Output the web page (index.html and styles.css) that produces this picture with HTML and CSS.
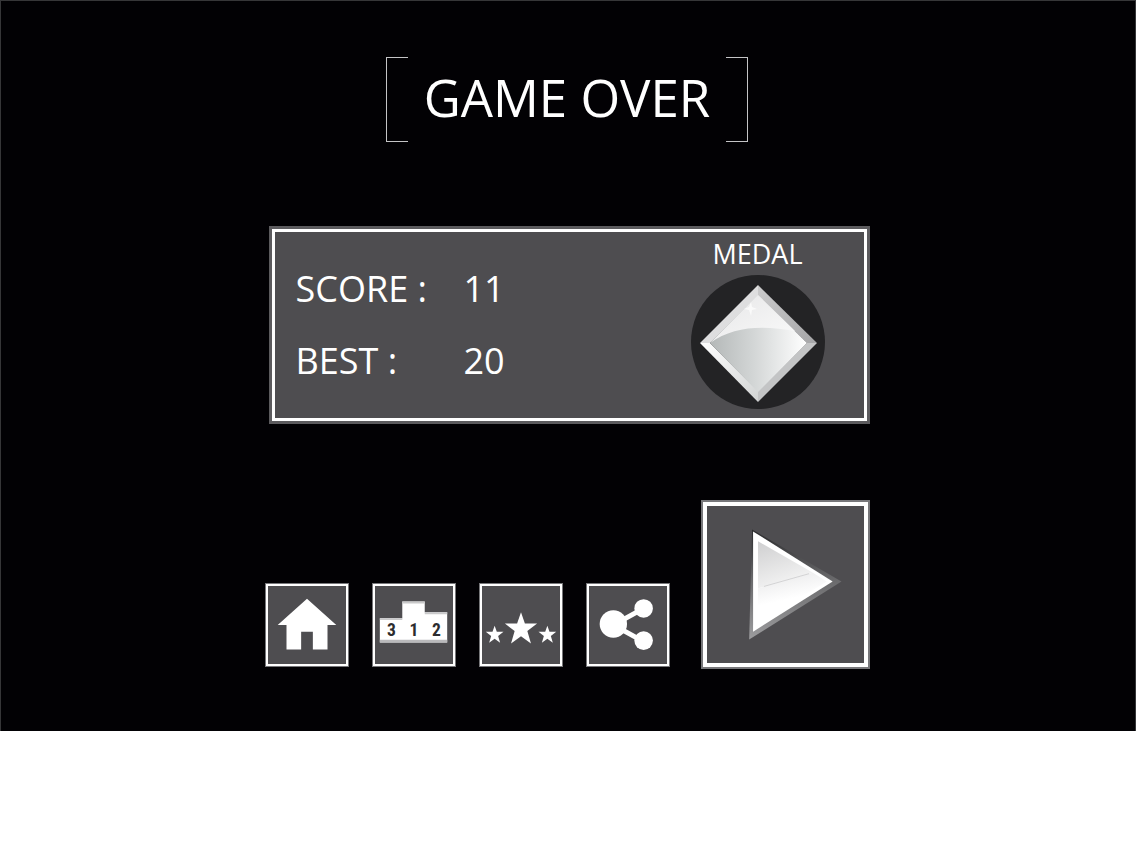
FILE: index.html
```html
<!DOCTYPE html>
<html lang="en">
<head>
    <meta charset="UTF-8">
    <meta name="viewport" content="width=device-width, initial-scale=1">
    <title>Game Over</title>
    <link rel="stylesheet" href="styles.css">
</head>
<body>

<main class="screen">
    <h1 class="title">GAME OVER</h1>

    <div class="content">
        <section class="board">
            <dl class="scores">
                <dt>SCORE :</dt>
                <dd>11</dd>
                <dt>BEST :</dt>
                <dd>20</dd>
            </dl>

            <div class="medal">
                <h2 class="medal-title">MEDAL</h2>
                <svg class="medal-icon" viewBox="0 0 134 134" aria-hidden="true">
                    <defs>
                        <linearGradient id="face" x1="0" y1="0" x2="1" y2="0">
                            <stop offset="0" stop-color="#b4b8b8"/>
                            <stop offset="0.45" stop-color="#d3d6d6"/>
                            <stop offset="1" stop-color="#ffffff"/>
                        </linearGradient>
                        <linearGradient id="shine" x1="0" y1="0" x2="1" y2="1">
                            <stop offset="0" stop-color="#e6e6e7"/>
                            <stop offset="1" stop-color="#fafafa"/>
                        </linearGradient>
                        <linearGradient id="edge-right" x1="0" y1="0" x2="1" y2="1">
                            <stop offset="0" stop-color="#cccccd"/>
                            <stop offset="1" stop-color="#a5a5a7"/>
                        </linearGradient>
                        <linearGradient id="edge-low" x1="0" y1="0" x2="1" y2="1">
                            <stop offset="0" stop-color="#ffffff"/>
                            <stop offset="1" stop-color="#d2d4d4"/>
                        </linearGradient>
                    </defs>
                    <circle cx="67" cy="67" r="67" fill="#232325"/>
                    <path d="M67 10L9 68H19L67 21z" fill="#dededf"/>
                    <path d="M67 10l59 58H116L67 21z" fill="url(#edge-right)"/>
                    <path d="M9 68l58 59V116L19 68z" fill="url(#edge-low)"/>
                    <path d="M126 68l-59 59V116L116 68z" fill="#c3c4c5"/>
                    <path d="M67 20l49 48-49 49-48-49z" fill="url(#face)"/>
                    <path d="M67 20L19 68C42 51 72 50 104 56z" fill="url(#shine)"/>
                    <path d="M60 27l1 5 5 2-5 1-1 6-2-6-5-1 5-2z" fill="#fafafa"/>
                </svg>
            </div>
        </section>

        <nav class="actions">
            <div class="menu">
                <button type="button" class="tile" aria-label="Home">
                    <svg viewBox="0 0 84 84" aria-hidden="true">
                        <path d="M42 15L12 42h9v25h15V49h12v18h15V42h9z" fill="#fff"/>
                    </svg>
                </button>
                <button type="button" class="tile" aria-label="Leaderboard">
                    <svg viewBox="0 0 84 84" aria-hidden="true">
                        <path d="M7 35h23V18h23v11h23v31H7z" fill="#fff"/>
                        <path d="M30 18h23v2H30zM53 29h23v2H53zM7 35h23v2H7z" fill="#c9c9ca"/>
                        <path d="M7 57h69v3H7z" fill="#b9b9bb"/>
                        <text class="rank" x="19" y="53">3</text>
                        <text class="rank" x="42" y="53">1</text>
                        <text class="rank" x="65" y="53">2</text>
                    </svg>
                </button>
                <button type="button" class="tile" aria-label="Achievements">
                    <svg viewBox="0 0 84 84" aria-hidden="true">
                        <defs>
                            <path id="star" d="M0-17L4-5.500 16.500-5.500 6.500 2.100 10.200 15 0 7.500-10.200 15-6.500 2.100-16.500-5.500-4-5.500z"/>
                        </defs>
                        <g fill="#fff">
                            <use href="#star" transform="translate(42 46)"/>
                            <use href="#star" transform="translate(15 52) scale(.55)"/>
                            <use href="#star" transform="translate(69 52) scale(.55)"/>
                        </g>
                    </svg>
                </button>
                <button type="button" class="tile" aria-label="Share">
                    <svg viewBox="0 0 84 84" aria-hidden="true">
                        <path d="M58 25L27 42l31 17" fill="none" stroke="#fff" stroke-width="5"/>
                        <circle cx="27" cy="41" r="14" fill="#fff"/>
                        <circle cx="58" cy="25" r="9.500" fill="#fff"/>
                        <circle cx="58" cy="58" r="9.500" fill="#fff"/>
                    </svg>
                </button>
            </div>

            <button type="button" class="tile play" aria-label="Play again">
                <svg viewBox="0 0 168 168" aria-hidden="true">
                    <defs>
                        <linearGradient id="play-face" x1="0" y1="0" x2="0.4" y2="1">
                            <stop offset="0" stop-color="#cfcfd0"/>
                            <stop offset="1" stop-color="#f4f4f4"/>
                        </linearGradient>
                        <linearGradient id="play-low" x1="0" y1="0" x2="0.3" y2="1">
                            <stop offset="0" stop-color="#e6e6e7"/>
                            <stop offset="0.6" stop-color="#ffffff"/>
                        </linearGradient>
                        <linearGradient id="play-side" x1="0" y1="0" x2="0" y2="1">
                            <stop offset="0" stop-color="#2a2a2c"/>
                            <stop offset="0.45" stop-color="#69696b"/>
                            <stop offset="1" stop-color="#9c9c9e"/>
                        </linearGradient>
                    </defs>
                    <path d="M50 28l91 53-94 59z" fill="url(#play-side)"/>
                    <path d="M51 30l81 51-81 51z" fill="#fff"/>
                    <path d="M56 40l56 32-56 16z" fill="url(#play-face)"/>
                    <path d="M56 88l56-16 14 9-70 43z" fill="url(#play-low)"/>
                    <path d="M62 86l46-13" stroke="#d2d2d3" stroke-width="1"/>
                </svg>
            </button>
        </nav>
    </div>
</main>

</body>
</html>
```
FILE: styles.css
```css
* {
    box-sizing: border-box;
    margin: 0;
    padding: 0;
}

body {
    background-color: #ffffff;
    font-family: 'Open Sans', 'Noto Sans', sans-serif;
    color: #ffffff;
}

.screen {
    display: flex;
    flex-direction: column;
    align-items: center;
    padding: 56px 18px 62px 16px;
    background-color: #020104;
    border: 1px solid #363638;
    border-bottom: none;
}

.title {
    position: relative;
    width: 100%;
    max-width: 362px;
    padding-bottom: 5px;
    font-size: 51px;
    font-weight: 400;
    line-height: 80px;
    text-align: center;
    white-space: nowrap;
}

/* corner brackets on both sides of the title */
.title::before,
.title::after {
    content: "";
    position: absolute;
    top: 0;
    bottom: 0;
    width: 21px;
    border: 1px solid #c4c4c6;
}

.title::before {
    left: 0;
    border-right: none;
}

.title::after {
    right: 0;
    border-left: none;
}

.content {
    display: flex;
    flex-direction: column;
    gap: 76px;
    width: 100%;
    max-width: 605px;
    margin-top: 84px;
}

.board {
    display: flex;
    justify-content: space-between;
    margin-left: 4px;
    padding: 12px 42px 12px 24px;
    background-color: #4e4d50;
    border: 3px solid #5c5b5e;
    box-shadow: inset 0 0 0 3px #ffffff;
}

.scores {
    display: grid;
    grid-template-columns: 168px auto;
    align-content: center;
    font-size: 36px;
    line-height: 72px;
}

.scores dd {
    min-width: 44px;
}

.medal {
    display: flex;
    flex-direction: column;
    align-items: center;
}

.medal-title {
    font-size: 27px;
    font-weight: 400;
    line-height: 26px;
    margin-bottom: 8px;
}

.medal-icon {
    display: block;
    width: 134px;
    height: 134px;
}

.actions {
    display: flex;
    justify-content: space-between;
    align-items: flex-end;
}

.menu {
    display: flex;
    gap: 23px;
    padding-bottom: 2px;
}

.tile {
    width: 84px;
    height: 84px;
    background-color: #4e4d50;
    border: 1px solid #77777a;
    box-shadow: inset 0 0 0 2px #ffffff;
    cursor: pointer;
}

.tile svg {
    display: block;
    width: 100%;
    height: 100%;
}

.play {
    width: 169px;
    height: 169px;
    border-width: 2px;
    box-shadow: inset 0 0 0 4px #ffffff;
}

.rank {
    font-family: 'Roboto Condensed', 'Liberation Sans Narrow', 'Liberation Sans', sans-serif;
    font-size: 18px;
    font-weight: 700;
    text-anchor: middle;
    fill: #2c2c2e;
}
```
